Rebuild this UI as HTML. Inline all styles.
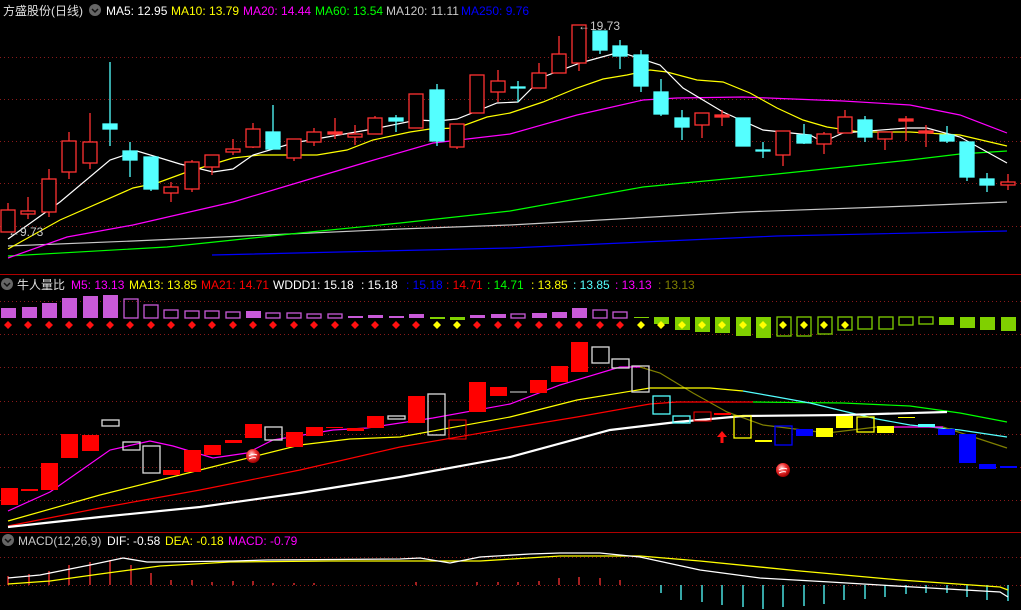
<!DOCTYPE html>
<html><head><meta charset="utf-8"><style>
html,body{margin:0;padding:0;background:#000;width:1021px;height:610px;overflow:hidden}
svg{display:block}
text{font-family:"Liberation Sans","Noto Sans CJK SC",sans-serif;font-size:12px}
</style></head><body>
<svg width="1021" height="610" viewBox="0 0 1021 610" xmlns="http://www.w3.org/2000/svg">
<rect width="1021" height="610" fill="#000"/>
<!-- grid -->
<g stroke="#8a1a1a" stroke-dasharray="1,3" stroke-width="1">
<line x1="0" y1="57.5" x2="1021" y2="57.5"/><line x1="0" y1="99.5" x2="1021" y2="99.5"/>
<line x1="0" y1="141.5" x2="1021" y2="141.5"/><line x1="0" y1="183.5" x2="1021" y2="183.5"/>
<line x1="0" y1="226.5" x2="1021" y2="226.5"/>
<line x1="0" y1="301.5" x2="1021" y2="301.5"/><line x1="0" y1="334.5" x2="1021" y2="334.5"/>
<line x1="0" y1="367.5" x2="1021" y2="367.5"/><line x1="0" y1="401.5" x2="1021" y2="401.5"/>
<line x1="0" y1="434.5" x2="1021" y2="434.5"/><line x1="0" y1="467.5" x2="1021" y2="467.5"/>
<line x1="0" y1="500.5" x2="1021" y2="500.5"/>
<line x1="0" y1="557.5" x2="1021" y2="557.5"/><line x1="0" y1="585.5" x2="1021" y2="585.5"/>
</g>
<line x1="0" y1="274.5" x2="1021" y2="274.5" stroke="#b00000"/>
<line x1="0" y1="532.5" x2="1021" y2="532.5" stroke="#b00000"/>

<!-- MA lines main -->
<g fill="none" stroke-width="1.2">
<polyline stroke="#0000ff" points="212,255 510,248 777,236 1007,231"/>
<polyline stroke="#c8c8c8" points="8,246 133,241 267,235 400,229 510,225 743,212 910,206 1007,202"/>
<polyline stroke="#00ff00" points="8,256 167,247 300,233 400,223 510,211 643,187 777,174 910,160 960,154 1007,151"/>
<polyline stroke="#ff00ff" points="8,258 67,237 133,225 233,202 300,182 367,162 433,143 510,134 577,115 643,100 677,98 743,97 793,99 843,101 910,105 960,115 1007,133"/>
<polyline stroke="#ffff00" points="8,249 60,220 133,188 157,183 187,172 233,158 260,155 317,155 347,150 373,140 410,132 430,129 457,128 487,117 510,113 543,102 577,88 603,79 627,75 650,70 667,72 697,80 723,82 750,93 777,108 803,120 827,127 860,132 910,132 960,135 1007,146"/>
<polyline stroke="#ffffff" points="8,239 60,202 110,160 137,151 157,157 180,164 213,172 233,169 253,155 293,143 333,136 373,129 417,120 437,121 457,119 497,103 518,102 543,77 580,63 620,52 660,65 683,88 723,112 763,130 810,135 823,142 843,133 907,128 927,128 960,137 1007,163"/>
</g>

<!-- candles -->
<g stroke-width="1.3">
<g stroke="#ff3232" fill="#000">
<line x1="8" y1="203" x2="8" y2="232"/><rect x="1" y="210" width="14" height="22"/>
<line x1="28" y1="197" x2="28" y2="219"/><rect x="21" y="211" width="14" height="3"/>
<line x1="49" y1="169" x2="49" y2="217"/><rect x="42" y="179" width="14" height="33"/>
<line x1="69" y1="132" x2="69" y2="179"/><rect x="62" y="141" width="14" height="31"/>
<line x1="90" y1="113" x2="90" y2="169"/><rect x="83" y="142" width="14" height="21"/>
<line x1="171" y1="182" x2="171" y2="202"/><rect x="164" y="187" width="14" height="6"/>
<line x1="192" y1="160" x2="192" y2="192"/><rect x="185" y="162" width="14" height="27"/>
<line x1="212" y1="155" x2="212" y2="175"/><rect x="205" y="155" width="14" height="12"/>
<line x1="233" y1="139" x2="233" y2="155"/><rect x="226" y="149" width="14" height="3"/>
<line x1="253" y1="123" x2="253" y2="148"/><rect x="246" y="129" width="14" height="18"/>
<line x1="294" y1="139" x2="294" y2="161"/><rect x="287" y="139" width="14" height="19"/>
<line x1="314" y1="128" x2="314" y2="146"/><rect x="307" y="132" width="14" height="10"/>
<line x1="335" y1="118" x2="335" y2="139"/><rect x="328" y="132" width="14" height="2" fill="#ff3232"/>
<line x1="355" y1="125" x2="355" y2="145"/><rect x="348" y="134" width="14" height="3"/>
<line x1="375" y1="116" x2="375" y2="134"/><rect x="368" y="118" width="14" height="16"/>
<line x1="416" y1="94" x2="416" y2="128"/><rect x="409" y="94" width="14" height="34"/>
<line x1="457" y1="124" x2="457" y2="149"/><rect x="450" y="124" width="14" height="23"/>
<line x1="477" y1="75" x2="477" y2="113"/><rect x="470" y="75" width="14" height="38"/>
<line x1="498" y1="70" x2="498" y2="102"/><rect x="491" y="81" width="14" height="11"/>
<line x1="539" y1="63" x2="539" y2="88"/><rect x="532" y="73" width="14" height="15"/>
<line x1="559" y1="36" x2="559" y2="73"/><rect x="552" y="54" width="14" height="19"/>
<line x1="579" y1="25" x2="579" y2="71"/><rect x="572" y="25" width="14" height="38"/>
<line x1="702" y1="113" x2="702" y2="138"/><rect x="695" y="113" width="14" height="12"/>
<line x1="722" y1="110" x2="722" y2="126"/><rect x="715" y="115" width="14" height="2" fill="#ff3232"/>
<line x1="783" y1="131" x2="783" y2="166"/><rect x="776" y="131" width="14" height="24"/>
<line x1="824" y1="132" x2="824" y2="154"/><rect x="817" y="134" width="14" height="10"/>
<line x1="845" y1="110" x2="845" y2="133"/><rect x="838" y="117" width="14" height="16"/>
<line x1="885" y1="132" x2="885" y2="150"/><rect x="878" y="132" width="14" height="7"/>
<line x1="906" y1="116" x2="906" y2="141"/><rect x="899" y="119" width="14" height="2" fill="#ff3232"/>
<line x1="926" y1="125" x2="926" y2="147"/><rect x="919" y="131" width="14" height="2" fill="#ff3232"/>
<line x1="1008" y1="174" x2="1008" y2="190"/><rect x="1001" y="182" width="14" height="3"/>
</g>
<g stroke="#54ffff" fill="#54ffff">
<line x1="110" y1="62" x2="110" y2="146"/><rect x="103" y="124" width="14" height="5"/>
<line x1="130" y1="142" x2="130" y2="177"/><rect x="123" y="151" width="14" height="9"/>
<line x1="151" y1="157" x2="151" y2="191"/><rect x="144" y="157" width="14" height="32"/>
<line x1="273" y1="105" x2="273" y2="149"/><rect x="266" y="132" width="14" height="17"/>
<line x1="396" y1="115" x2="396" y2="132"/><rect x="389" y="118" width="14" height="3"/>
<line x1="437" y1="84" x2="437" y2="146"/><rect x="430" y="90" width="14" height="51"/>
<line x1="518" y1="81" x2="518" y2="102"/><rect x="511" y="87" width="14" height="1"/>
<line x1="600" y1="31" x2="600" y2="54"/><rect x="593" y="31" width="14" height="19"/>
<line x1="620" y1="40" x2="620" y2="69"/><rect x="613" y="46" width="14" height="10"/>
<line x1="641" y1="50" x2="641" y2="92"/><rect x="634" y="55" width="14" height="31"/>
<line x1="661" y1="79" x2="661" y2="116"/><rect x="654" y="92" width="14" height="22"/>
<line x1="682" y1="110" x2="682" y2="140"/><rect x="675" y="118" width="14" height="9"/>
<line x1="743" y1="118" x2="743" y2="146"/><rect x="736" y="118" width="14" height="28"/>
<line x1="763" y1="142" x2="763" y2="158"/><rect x="756" y="150" width="14" height="1"/>
<line x1="804" y1="124" x2="804" y2="144"/><rect x="797" y="135" width="14" height="8"/>
<line x1="865" y1="116" x2="865" y2="142"/><rect x="858" y="120" width="14" height="17"/>
<line x1="947" y1="126" x2="947" y2="143"/><rect x="940" y="135" width="14" height="6"/>
<line x1="967" y1="142" x2="967" y2="181"/><rect x="960" y="142" width="14" height="35"/>
<line x1="987" y1="173" x2="987" y2="192"/><rect x="980" y="179" width="14" height="6"/>
</g>
</g>
<text x="8" y="236" fill="#c8c8c8">←9.73</text>
<text x="578" y="30" fill="#c8c8c8">←19.73</text>

<!-- headers -->
<circle cx="95" cy="10" r="6" fill="#666"/><path d="M92 9 L95 12 L98 9" stroke="#111" stroke-width="1.5" fill="none"/>
<text x="3" y="15" fill="#e0e0e0" font-size="13">方盛股份(日线)</text>
<text x="106" y="15" fill="#fff">MA5: 12.95</text>
<text x="171" y="15" fill="#ffff00">MA10: 13.79</text>
<text x="243" y="15" fill="#ff00ff">MA20: 14.44</text>
<text x="315" y="15" fill="#00ff00">MA60: 13.54</text>
<text x="386" y="15" fill="#c8c8c8">MA120: 11.11</text>
<text x="461" y="15" fill="#0000ff">MA250: 9.76</text>

<circle cx="7" cy="284" r="6" fill="#666"/><path d="M4 283 L7 286 L10 283" stroke="#111" stroke-width="1.5" fill="none"/>
<text x="17" y="289" fill="#e0e0e0" font-size="13">牛人量比</text>
<text x="71" y="289" fill="#ff00ff">M5: 13.13</text>
<text x="129" y="289" fill="#ffff00">MA13: 13.85</text>
<text x="201" y="289" fill="#ff0000">MA21: 14.71</text>
<text x="273" y="289" fill="#fff">WDDD1: 15.18</text>
<text x="361" y="289" fill="#fff">: 15.18</text>
<text x="406" y="289" fill="#0000ff">: 15.18</text>
<text x="446" y="289" fill="#ff0000">: 14.71</text>
<text x="487" y="289" fill="#00ff00">: 14.71</text>
<text x="531" y="289" fill="#ffff00">: 13.85</text>
<text x="573" y="289" fill="#54ffff">: 13.85</text>
<text x="615" y="289" fill="#ff00ff">: 13.13</text>
<text x="658" y="289" fill="#808000">: 13.13</text>

<circle cx="8" cy="540" r="6" fill="#666"/><path d="M5 539 L8 542 L11 539" stroke="#111" stroke-width="1.5" fill="none"/>
<text x="18" y="545" fill="#c8c8c8">MACD(12,26,9)</text>
<text x="107" y="545" fill="#fff">DIF: -0.58</text>
<text x="165" y="545" fill="#ffff00">DEA: -0.18</text>
<text x="228" y="545" fill="#ff00ff">MACD: -0.79</text>

<!-- volume ratio bars -->
<g fill="#c85ad8">
<rect x="1" y="308" width="15" height="10"/><rect x="22" y="307" width="15" height="11"/><rect x="42" y="303" width="15" height="15"/>
<rect x="62" y="298" width="15" height="20"/><rect x="83" y="296" width="15" height="22"/><rect x="103" y="295" width="15" height="23"/>
<rect x="246" y="311" width="15" height="7"/><rect x="348" y="316" width="15" height="2"/><rect x="368" y="315" width="15" height="3"/>
<rect x="389" y="316" width="15" height="2"/><rect x="409" y="314" width="15" height="4"/><rect x="470" y="315" width="15" height="3"/>
<rect x="491" y="314" width="15" height="4"/><rect x="532" y="313" width="15" height="5"/><rect x="552" y="312" width="15" height="6"/>
<rect x="572" y="308" width="15" height="10"/>
</g>
<g fill="none" stroke="#c85ad8" stroke-width="1.3">
<rect x="124" y="299" width="14" height="19"/><rect x="144" y="305" width="14" height="13"/><rect x="164" y="310" width="14" height="8"/>
<rect x="185" y="311" width="14" height="7"/><rect x="205" y="311" width="14" height="7"/><rect x="226" y="312" width="14" height="6"/>
<rect x="266" y="313" width="14" height="5"/><rect x="287" y="313" width="14" height="5"/><rect x="307" y="314" width="14" height="4"/>
<rect x="328" y="314" width="14" height="4"/><rect x="511" y="314" width="14" height="4"/><rect x="593" y="310" width="14" height="8"/>
<rect x="613" y="312" width="14" height="6"/>
</g>
<g fill="#80d000">
<rect x="430" y="317" width="15" height="2"/><rect x="450" y="317" width="15" height="3"/><rect x="634" y="317" width="15" height="1"/>
<rect x="654" y="317" width="15" height="7"/><rect x="675" y="317" width="15" height="13"/><rect x="695" y="317" width="15" height="15"/>
<rect x="715" y="317" width="15" height="16"/><rect x="736" y="317" width="15" height="19"/><rect x="756" y="317" width="15" height="21"/>
<rect x="939" y="317" width="15" height="8"/><rect x="960" y="317" width="15" height="11"/><rect x="980" y="317" width="15" height="13"/><rect x="1001" y="317" width="15" height="14"/>
</g>
<g fill="none" stroke="#80d000" stroke-width="1.3">
<rect x="777" y="317" width="14" height="19"/><rect x="797" y="317" width="14" height="19"/><rect x="818" y="317" width="14" height="17"/>
<rect x="838" y="317" width="14" height="13"/><rect x="858" y="317" width="14" height="12"/><rect x="879" y="317" width="14" height="12"/>
<rect x="899" y="317" width="14" height="8"/><rect x="919" y="317" width="14" height="7"/>
</g>
<!-- diamonds -->
<g fill="#ff1010">
<path d="M8 321l4 4-4 4-4-4z"/><path d="M28 321l4 4-4 4-4-4z"/><path d="M49 321l4 4-4 4-4-4z"/><path d="M69 321l4 4-4 4-4-4z"/>
<path d="M90 321l4 4-4 4-4-4z"/><path d="M110 321l4 4-4 4-4-4z"/><path d="M130 321l4 4-4 4-4-4z"/><path d="M151 321l4 4-4 4-4-4z"/>
<path d="M171 321l4 4-4 4-4-4z"/><path d="M192 321l4 4-4 4-4-4z"/><path d="M212 321l4 4-4 4-4-4z"/><path d="M233 321l4 4-4 4-4-4z"/>
<path d="M253 321l4 4-4 4-4-4z"/><path d="M273 321l4 4-4 4-4-4z"/><path d="M294 321l4 4-4 4-4-4z"/><path d="M314 321l4 4-4 4-4-4z"/>
<path d="M335 321l4 4-4 4-4-4z"/><path d="M355 321l4 4-4 4-4-4z"/><path d="M375 321l4 4-4 4-4-4z"/><path d="M396 321l4 4-4 4-4-4z"/>
<path d="M416 321l4 4-4 4-4-4z"/><path d="M477 321l4 4-4 4-4-4z"/><path d="M498 321l4 4-4 4-4-4z"/><path d="M518 321l4 4-4 4-4-4z"/>
<path d="M539 321l4 4-4 4-4-4z"/><path d="M559 321l4 4-4 4-4-4z"/><path d="M579 321l4 4-4 4-4-4z"/><path d="M600 321l4 4-4 4-4-4z"/><path d="M620 321l4 4-4 4-4-4z"/>
</g>
<g fill="#ffff00">
<path d="M437 321l4 4-4 4-4-4z"/><path d="M457 321l4 4-4 4-4-4z"/><path d="M641 321l4 4-4 4-4-4z"/><path d="M661 321l4 4-4 4-4-4z"/>
<path d="M682 321l4 4-4 4-4-4z"/><path d="M702 321l4 4-4 4-4-4z"/><path d="M722 321l4 4-4 4-4-4z"/><path d="M743 321l4 4-4 4-4-4z"/>
<path d="M763 321l4 4-4 4-4-4z"/><path d="M783 321l4 4-4 4-4-4z"/><path d="M804 321l4 4-4 4-4-4z"/><path d="M824 321l4 4-4 4-4-4z"/><path d="M845 321l4 4-4 4-4-4z"/>
</g>

<!-- lower indicator lines -->
<g fill="none">
<polyline stroke="#00ff00" stroke-width="1.2" points="753,402 843,403 910,406 960,413 1007,422"/>
<polyline stroke="#54ffff" stroke-width="1.2" points="743,391 777,397 810,403 843,411 877,419 910,425 960,430 1007,437"/>
<polyline stroke="#808000" stroke-width="1.2" points="640,367 660,373 693,393 727,412 763,425 827,433 877,427 943,427 1007,448"/>
<polyline stroke="#ff0000" stroke-width="1.2" points="8,526 100,508 200,490 300,470 400,447 510,428 577,417 650,404 677,402 753,402"/>
<polyline stroke="#ffff00" stroke-width="1.2" points="8,521 100,495 200,470 300,445 350,439 400,437 510,417 577,400 650,388 710,388 743,391"/>
<polyline stroke="#ff00ff" stroke-width="1.2" points="8,511 50,492 110,450 150,441 173,446 213,458 247,453 273,440 333,430 367,428 433,418 510,404 560,385 620,367 640,367"/>
<polyline stroke="#ff00ff" stroke-width="1.2" points="877,427 943,427"/>
<polyline stroke="#ffffff" stroke-width="2.2" points="8,527 100,517 200,507 300,493 400,477 510,457 610,430 677,422 743,416 843,415 947,412"/>
</g>
<!-- lower boxes -->
<g fill="#ff0000">
<rect x="1" y="488" width="17" height="17"/><rect x="21" y="489" width="17" height="2"/><rect x="41" y="463" width="17" height="27"/>
<rect x="61" y="434" width="17" height="24"/><rect x="82" y="435" width="17" height="16"/><rect x="163" y="470" width="17" height="5"/>
<rect x="184" y="450" width="17" height="22"/><rect x="204" y="445" width="17" height="10"/><rect x="225" y="440" width="17" height="3"/>
<rect x="245" y="424" width="17" height="14"/><rect x="286" y="432" width="17" height="15"/><rect x="306" y="427" width="17" height="9"/>
<rect x="326" y="427" width="17" height="1"/><rect x="347" y="428" width="17" height="3"/><rect x="367" y="416" width="17" height="12"/>
<rect x="408" y="396" width="17" height="27"/><rect x="469" y="382" width="17" height="30"/><rect x="490" y="387" width="17" height="9"/>
<rect x="530" y="380" width="17" height="13"/><rect x="551" y="366" width="17" height="16"/><rect x="571" y="342" width="17" height="30"/>
<rect x="714" y="413" width="17" height="2"/>
</g>
<g fill="none" stroke="#dcdcdc" stroke-width="1.3">
<rect x="102" y="420" width="17" height="6"/><rect x="123" y="442" width="17" height="8"/><rect x="143" y="446" width="17" height="27"/>
<rect x="265" y="427" width="17" height="13"/><rect x="388" y="416" width="17" height="3"/><rect x="428" y="394" width="17" height="41"/>
<rect x="592" y="347" width="17" height="16"/><rect x="612" y="359" width="17" height="9"/><rect x="632" y="366" width="17" height="26"/>
</g>
<line x1="510" y1="392" x2="527" y2="392" stroke="#dcdcdc"/>
<rect x="449" y="420" width="17" height="19" fill="none" stroke="#ff0000"/>
<rect x="694" y="412" width="17" height="9" fill="none" stroke="#ff0000"/>
<g fill="none" stroke="#54ffff" stroke-width="1.3"><rect x="653" y="396" width="17" height="18"/><rect x="673" y="416" width="17" height="7"/></g>
<g fill="none" stroke="#ffff00" stroke-width="1.3"><rect x="734" y="416" width="17" height="22"/><rect x="857" y="417" width="17" height="15"/></g>
<g fill="#ffff00"><rect x="755" y="440" width="17" height="2"/><rect x="816" y="428" width="17" height="9"/><rect x="836" y="416" width="17" height="12"/><rect x="877" y="426" width="17" height="7"/><rect x="898" y="417" width="17" height="1"/></g>
<rect x="918" y="424" width="17" height="3" fill="#54ffff"/>
<rect x="775" y="426" width="17" height="19" fill="none" stroke="#0000ff" stroke-width="1.3"/>
<g fill="#0000ff"><rect x="796" y="429" width="17" height="7"/><rect x="938" y="429" width="17" height="6"/><rect x="959" y="434" width="17" height="29"/><rect x="979" y="464" width="17" height="5"/><rect x="1000" y="466" width="17" height="2"/></g>
<!-- arrow -->
<path d="M722 431 L727 437 L723.5 437 L723.5 443 L720.5 443 L720.5 437 L717 437 Z" fill="#ff1010"/>
<!-- balls -->
<defs><radialGradient id="bg" cx="40%" cy="35%" r="65%"><stop offset="0" stop-color="#ffd0d0"/><stop offset=".5" stop-color="#ee3030"/><stop offset="1" stop-color="#a00000"/></radialGradient></defs>
<circle cx="253" cy="456" r="7" fill="url(#bg)"/><path d="M249 456 q4 -3 8 -1 M249 459 q4 -2 7 -1" stroke="#fff" stroke-width="1" fill="none"/>
<circle cx="783" cy="470" r="7" fill="url(#bg)"/><path d="M779 470 q4 -3 8 -1 M779 473 q4 -2 7 -1" stroke="#fff" stroke-width="1" fill="none"/>

<!-- MACD -->
<g stroke="#ff3232" stroke-width="1.3">
<line x1="8" y1="585" x2="8" y2="576"/><line x1="29" y1="585" x2="29" y2="574"/><line x1="49" y1="585" x2="49" y2="571"/>
<line x1="69" y1="585" x2="69" y2="565"/><line x1="90" y1="585" x2="90" y2="562"/><line x1="110" y1="585" x2="110" y2="560"/>
<line x1="131" y1="585" x2="131" y2="565"/><line x1="151" y1="585" x2="151" y2="573"/><line x1="171" y1="585" x2="171" y2="580"/>
<line x1="192" y1="585" x2="192" y2="580"/><line x1="212" y1="585" x2="212" y2="582"/><line x1="233" y1="585" x2="233" y2="581"/>
<line x1="253" y1="585" x2="253" y2="581"/><line x1="273" y1="585" x2="273" y2="583"/><line x1="294" y1="585" x2="294" y2="583"/>
<line x1="314" y1="585" x2="314" y2="583"/><line x1="416" y1="585" x2="416" y2="582"/><line x1="477" y1="585" x2="477" y2="582"/>
<line x1="498" y1="585" x2="498" y2="582"/><line x1="518" y1="585" x2="518" y2="582"/><line x1="539" y1="585" x2="539" y2="581"/>
<line x1="559" y1="585" x2="559" y2="578"/><line x1="579" y1="585" x2="579" y2="577"/><line x1="600" y1="585" x2="600" y2="578"/><line x1="620" y1="585" x2="620" y2="580"/>
</g>
<g stroke="#54ffff" stroke-width="1.3">
<line x1="661" y1="585" x2="661" y2="593"/><line x1="681" y1="585" x2="681" y2="600"/><line x1="702" y1="585" x2="702" y2="602"/>
<line x1="722" y1="585" x2="722" y2="605"/><line x1="743" y1="585" x2="743" y2="607"/><line x1="763" y1="585" x2="763" y2="609"/>
<line x1="783" y1="585" x2="783" y2="607"/><line x1="804" y1="585" x2="804" y2="606"/><line x1="824" y1="585" x2="824" y2="604"/>
<line x1="844" y1="585" x2="844" y2="600"/><line x1="865" y1="585" x2="865" y2="599"/><line x1="885" y1="585" x2="885" y2="597"/>
<line x1="906" y1="585" x2="906" y2="594"/><line x1="926" y1="585" x2="926" y2="593"/><line x1="947" y1="585" x2="947" y2="593"/>
<line x1="967" y1="585" x2="967" y2="597"/><line x1="987" y1="585" x2="987" y2="600"/><line x1="1008" y1="585" x2="1008" y2="601"/>
</g>
<g fill="none" stroke-width="1.3">
<polyline stroke="#ffff00" points="8,584 50,581 100,574 130,570 160,566 230,562 330,561 400,561 480,561 560,556 640,556 700,561 800,571 900,580 1000,587 1008,590"/>
<polyline stroke="#ffffff" points="8,578 40,575 90,565 123,558 147,562 160,562 233,561 267,560 400,559 420,558 450,563 480,557 530,554 560,553 600,553 640,557 700,570 760,578 830,582 880,585 930,588 1000,592 1008,597"/>
</g>
</svg>
</body></html>
